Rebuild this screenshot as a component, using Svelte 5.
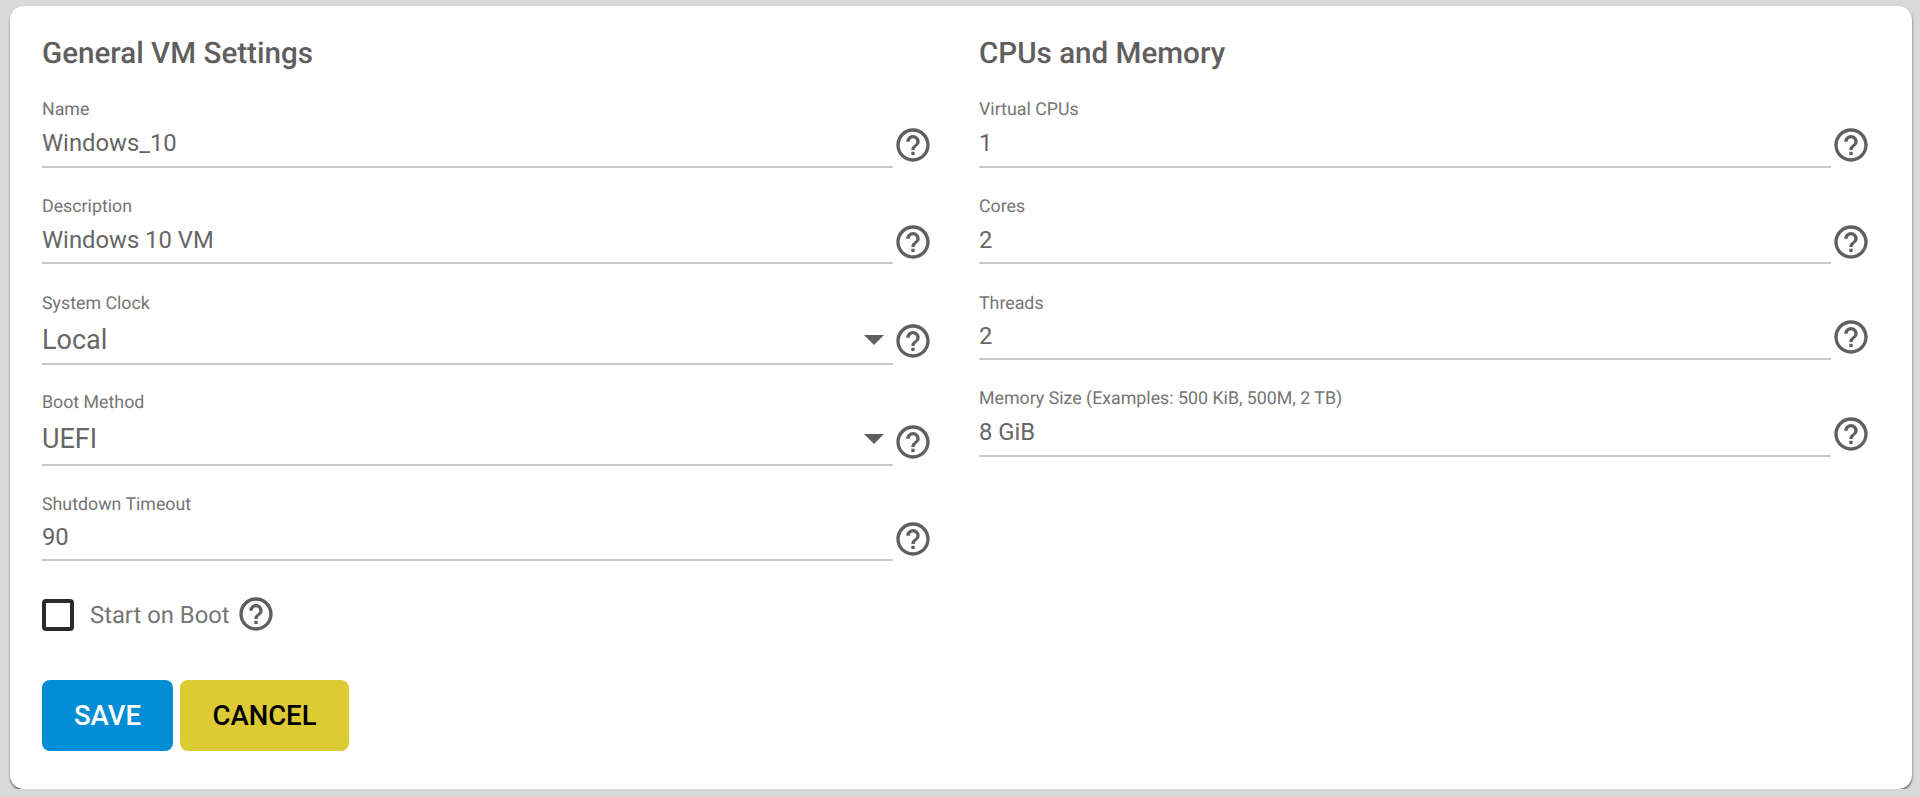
<script lang="ts">
  const general = [
    { label: "Name", value: "Windows_10", cls: "r-name" },
    { label: "Description", value: "Windows 10 VM", cls: "r-desc" },
    { label: "System Clock", value: "Local", options: ["Local", "UTC"], cls: "r-clock" },
    { label: "Boot Method", value: "UEFI", options: ["UEFI", "BIOS"], cls: "r-boot" },
    { label: "Shutdown Timeout", value: "90", cls: "r-timeout" },
  ];
  const cpus = [
    { label: "Virtual CPUs", value: "1", cls: "r-name" },
    { label: "Cores", value: "2", cls: "r-desc" },
    { label: "Threads", value: "2", cls: "r-threads" },
    { label: "Memory Size (Examples: 500 KiB, 500M, 2 TB)", value: "8 GiB", cls: "r-memory" },
  ];
  const helpPath =
    "M11 18h2v-2h-2v2zm1-16C6.48 2 2 6.48 2 12s4.48 10 10 10 10-4.48 10-10S17.52 2 12 2zm0 18c-4.41 0-8-3.59-8-8s3.59-8 8-8 8 3.59 8 8-3.59 8-8 8zm0-14c-2.21 0-4 1.79-4 4h2c0-1.1.9-2 2-2s2 .9 2 2c0 2-3 1.75-3 5h2c0-2.25 3-2.5 3-5 0-2.21-1.79-4-4-4z";
</script>

{#snippet help()}
  <svg class="help" viewBox="0 0 24 24" aria-hidden="true"><path d={helpPath} /></svg>
{/snippet}

{#snippet fields(list)}
  {#each list as f}
    <div class="field {f.cls}">
      <label class="control">
        <span class="label">{f.label}</span>
        {#if f.options}
          <span class="select-wrap">
            <select value={f.value}>
              {#each f.options as o}
                <option>{o}</option>
              {/each}
            </select>
            <span class="arrow"></span>
          </span>
        {:else}
          <input type="text" value={f.value} />
        {/if}
      </label>
      {@render help()}
    </div>
  {/each}
{/snippet}

<main class="card">
  <div class="cols">
    <section>
      <h2>General VM Settings</h2>
      {@render fields(general)}
      <div class="check">
        <span class="box"></span>
        <span class="check-label">Start on Boot</span>
        {@render help()}
      </div>
      <div class="actions">
        <button type="button" class="save">SAVE</button>
        <button type="button" class="cancel">CANCEL</button>
      </div>
    </section>
    <section>
      <h2>CPUs and Memory</h2>
      {@render fields(cpus)}
    </section>
  </div>
</main>

<style>
  :global(body) {
    margin: 0;
    background: #d9d9d9;
    font-family: Roboto, "Noto Sans", sans-serif;
    text-rendering: geometricPrecision;
  }
  .card {
    box-sizing: border-box;
    height: 783px;
    margin: 6px 8px 0 10px;
    padding: 0 32px;
    background: #fff;
    border-radius: 14px;
    box-shadow: 0 2px 2px rgba(0, 0, 0, 0.45), 1px 1px 3px rgba(0, 0, 0, 0.15);
  }
  .cols {
    display: grid;
    grid-template-columns: 891px 892px;
    column-gap: 46px;
  }
  h2 {
    margin: 0;
    height: 93px;
    padding-top: 30px;
    box-sizing: border-box;
    font-size: 29.6px;
    line-height: 36px;
    font-weight: 500;
    color: #5f5f5f;
  }
  .field {
    display: flex;
    height: var(--row);
  }
  .r-name { --row: 69px; --value: 46px; --gap: 0px; --icon: 3px; }
  .r-desc { --row: 96px; --value: 44px; --gap: 1px; --icon: 2px; }
  .r-clock { --row: 101px; --value: 46px; --gap: 3px; --icon: 4px; }
  .r-boot { --row: 101px; --value: 50px; --gap: 1px; --icon: 4px; }
  .r-timeout { --row: 95px; --value: 44px; --gap: 0px; --icon: 2px; }
  .r-threads { --row: 96px; --value: 44px; --gap: 0px; --icon: 3px; }
  .r-memory { --row: 97px; --value: 46px; --gap: 0px; --icon: 3px; }
  .control {
    flex: 1;
    display: flex;
    flex-direction: column;
    justify-content: flex-end;
    border-bottom: 2px solid #c8c8c8;
  }
  .label {
    margin-bottom: var(--gap);
    font-size: 17.8px;
    line-height: 20px;
    color: #757575;
  }
  input,
  select {
    display: block;
    width: 100%;
    height: var(--value);
    box-sizing: border-box;
    border: 0;
    outline: 0;
    padding: 0;
    background: transparent;
    font-family: inherit;
    color: #666;
    appearance: none;
  }
  input {
    font-size: 23.8px;
  }
  select {
    font-size: 27px;
  }
  .select-wrap {
    display: block;
    position: relative;
  }
  .arrow {
    position: absolute;
    right: 9px;
    top: calc(50% - 5px);
    border-left: 10px solid transparent;
    border-right: 10px solid transparent;
    border-top: 10px solid #5f5f5f;
  }
  .help {
    flex: none;
    width: 40px;
    height: 40px;
    fill: #5f5f5f;
    align-self: flex-end;
    margin-bottom: var(--icon);
  }
  .check {
    --icon: 0px;
    display: flex;
    align-items: center;
    height: 40px;
    margin-top: 33px;
  }
  .box {
    box-sizing: border-box;
    width: 32px;
    height: 32px;
    margin-top: 2px;
    border: 4px solid #2b2b2b;
    border-radius: 4px;
  }
  .check-label {
    margin-top: 2px;
    margin-left: 16px;
    margin-right: 6px;
    font-size: 23.8px;
    color: #757575;
  }
  .actions {
    display: flex;
    gap: 7px;
    margin-top: 46px;
  }
  button {
    height: 71px;
    border: 0;
    border-radius: 8px;
    padding: 0;
    font-family: inherit;
    font-size: 27.5px;
    font-weight: 500;
  }
  .save {
    width: 131px;
    background: #028dd4;
    color: #fff;
  }
  .cancel {
    width: 169px;
    background: #dccb35;
    color: #000;
  }
</style>
